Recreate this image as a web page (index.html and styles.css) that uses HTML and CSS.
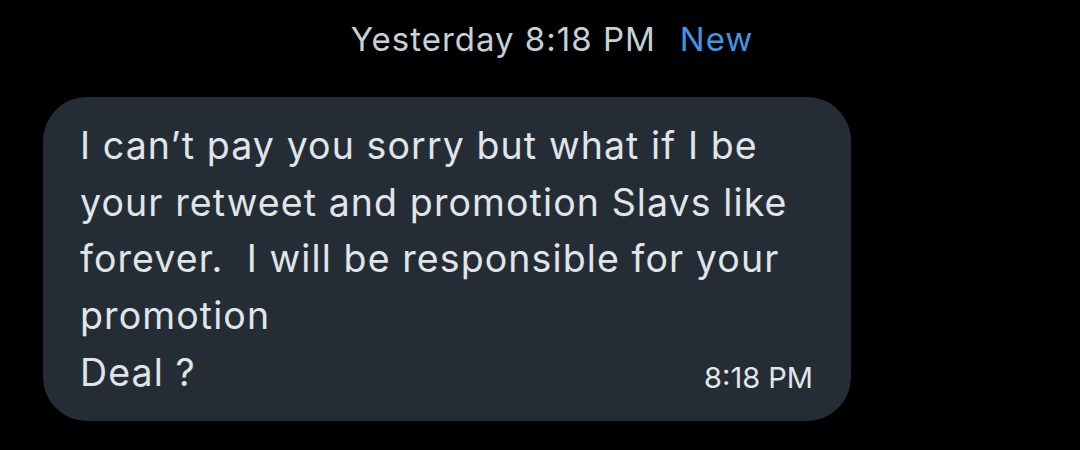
FILE: index.html
```html
<!DOCTYPE html>
<html>
<head>
<meta charset="utf-8">
<link rel="stylesheet" href="styles.css">
</head>
<body>
<div class="page">
  <div class="day"><span class="day-time">Yesterday 8:18 PM</span><span class="day-new">New</span></div>
  <div class="bubble">
    <div class="msg">
      <div class="line">I can’t pay you sorry but what if I be</div>
      <div class="line">your retweet and promotion Slavs like</div>
      <div class="line">forever.&nbsp; I will be responsible for your</div>
      <div class="line">promotion</div>
      <div class="line">Deal ?</div>
    </div>
    <div class="stamp">8:18 PM</div>
  </div>
</div>
</body>
</html>
```
FILE: styles.css
```css
html, body {
  margin: 0;
  padding: 0;
  background: #000;
}
.page {
  width: 1080px;
  height: 450px;
  background: #000;
  font-family: Inter, "Noto Sans", sans-serif;
  display: flex;
  flex-direction: column;
}
.day {
  display: flex;
  justify-content: center;
  gap: 24px;
  padding-top: 19px;
  padding-left: 24px;
  height: 97px;
  box-sizing: border-box;
  font-size: 33px;
  line-height: 40px;
  letter-spacing: 1px;
}
.day-time { color: #c6d0d8; }
.day-new { color: #3f95e6; }
.bubble {
  margin-left: 43px;
  width: 808px;
  height: 324px;
  box-sizing: border-box;
  background: #242d35;
  border-radius: 44px;
  padding: 21px 38px 0 37px;
  position: relative;
}
.msg {
  color: #e1e5e8;
  font-size: 37.5px;
  line-height: 56.7px;
  letter-spacing: 1.1px;
}
.line { white-space: nowrap; }
.stamp {
  position: absolute;
  right: 38px;
  bottom: 26px;
  color: #e3e6e8;
  font-size: 29px;
  line-height: 34px;
}
```
